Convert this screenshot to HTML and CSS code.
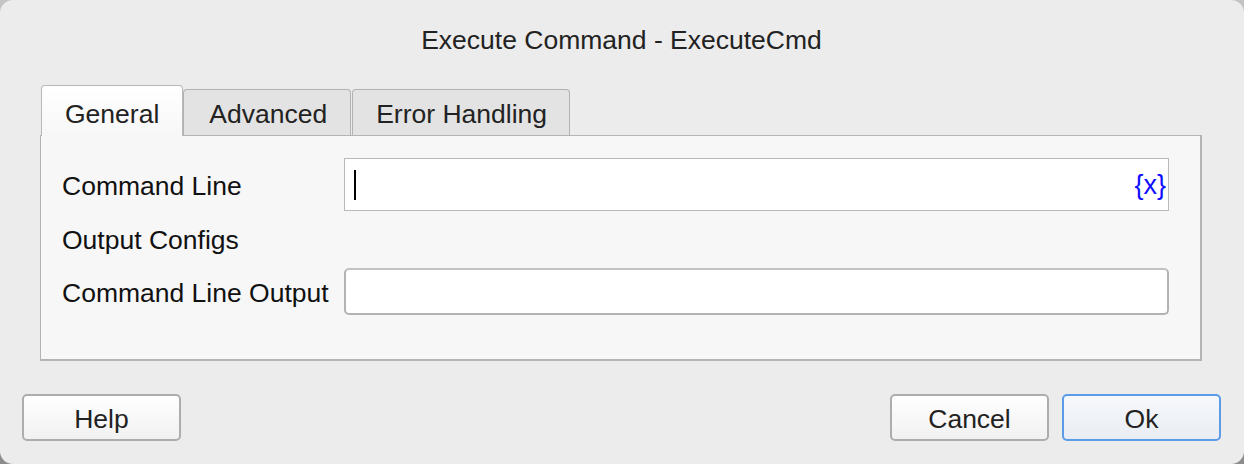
FILE: index.html
```html
<!DOCTYPE html>
<html>
<head>
<meta charset="utf-8">
<link rel="stylesheet" href="styles.css">
</head>
<body>
<div class="window">
  <div class="title">Execute Command - ExecuteCmd</div>
  <div class="tabs">
    <div class="tab active">General</div>
    <div class="tab tab-adv">Advanced</div>
    <div class="tab tab-err">Error Handling</div>
  </div>
  <div class="panel">
    <div class="row row-first">
      <div class="label">Command Line</div>
      <div class="input input-square"><span class="caret"></span><span class="var">{x}</span></div>
    </div>
    <div class="section">Output Configs</div>
    <div class="row">
      <div class="label">Command Line Output</div>
      <div class="input input-round"></div>
    </div>
  </div>
  <div class="buttons">
    <div class="btn">Help</div>
    <div class="spacer"></div>
    <div class="btn">Cancel</div>
    <div class="btn btn-default">Ok</div>
  </div>
</div>
</body>
</html>
```
FILE: styles.css
```css
html, body {
  margin: 0;
  padding: 0;
  width: 1244px;
  height: 464px;
  overflow: hidden;
  background: linear-gradient(#c4c4c4, #8c8c8c);
  font-family: "Liberation Sans", Arial, sans-serif;
  color: #1f1f1f;
}

.window {
  box-sizing: border-box;
  width: 1244px;
  height: 464px;
  border-radius: 13px;
  background: #ececec;
  padding: 0 23px 0 22px;
  display: flex;
  flex-direction: column;
}

.title {
  height: 85px;
  box-sizing: border-box;
  padding-top: 25px;
  line-height: 30px;
  font-size: 26.5px;
  text-align: center;
  color: #222;
}

.tabs {
  display: flex;
  align-items: flex-end;
  margin-left: 19px;
  height: 50px;
}

.tab {
  box-sizing: border-box;
  height: 46px;
  padding: 0 22px 0 24px;
  background: #e3e3e3;
  border: 1px solid #b2b2b2;
  border-bottom: none;
  border-radius: 4px 4px 0 0;
  font-size: 26.5px;
  line-height: 48px;
  color: #222;
  margin-right: 1px;
}

.tab-adv {
  padding: 0 23px 0 25px;
}

.tab-err {
  padding: 0 22px 0 23px;
}

.tab.active {
  height: 51px;
  line-height: 56px;
  padding: 0 23px;
  background: linear-gradient(#ffffff, #f7f7f7);
  margin-bottom: -1px;
  position: relative;
  z-index: 1;
  margin-right: 0;
  border-color: #b8b8b8;
}

.panel {
  box-sizing: border-box;
  height: 226px;
  margin: 0 19px 0 18px;
  background: #f7f7f7;
  border: 1px solid #b4b4b4;
  border-right: 2px solid #b4b4b4;
  border-bottom: 2px solid #b4b4b4;
  padding: 22px 31px 0 21px;
}

.row {
  display: flex;
  align-items: center;
}

.label {
  width: 282px;
  flex: none;
  font-size: 26.5px;
  line-height: 32px;
  padding-top: 2px;
  color: #111;
}

.input {
  flex: 1;
  box-sizing: border-box;
  background: #fff;
  display: flex;
  align-items: center;
}

.input-square {
  height: 53px;
  border: 1px solid #b9b9b9;
  padding: 0 2px 0 9px;
}

.caret {
  width: 2px;
  height: 30px;
  background: #000;
}

.var {
  margin-left: auto;
  color: #0f0fff;
  font-size: 27px;
  line-height: 30px;
}

.section {
  font-size: 26.5px;
  color: #111;
  height: 30px;
  line-height: 32px;
  margin: 13px 0 14px;
}

.input-round {
  height: 47px;
  border: 2px solid #b3b3b3;
  border-top-color: #c2c2c2;
  border-radius: 5px;
}

.buttons {
  margin-top: 33px;
  display: flex;
  gap: 13px;
}

.spacer {
  flex: 1;
}

.btn {
  box-sizing: border-box;
  width: 159px;
  height: 47px;
  border: 2px solid #adadad;
  border-radius: 5px;
  background: linear-gradient(#ffffff, #f1f1f1);
  font-size: 26.5px;
  line-height: 46px;
  text-align: center;
  color: #222;
}

.btn-default {
  border-color: #5b9be8;
  background: linear-gradient(#f6f8fb, #e9edf3);
}
```
